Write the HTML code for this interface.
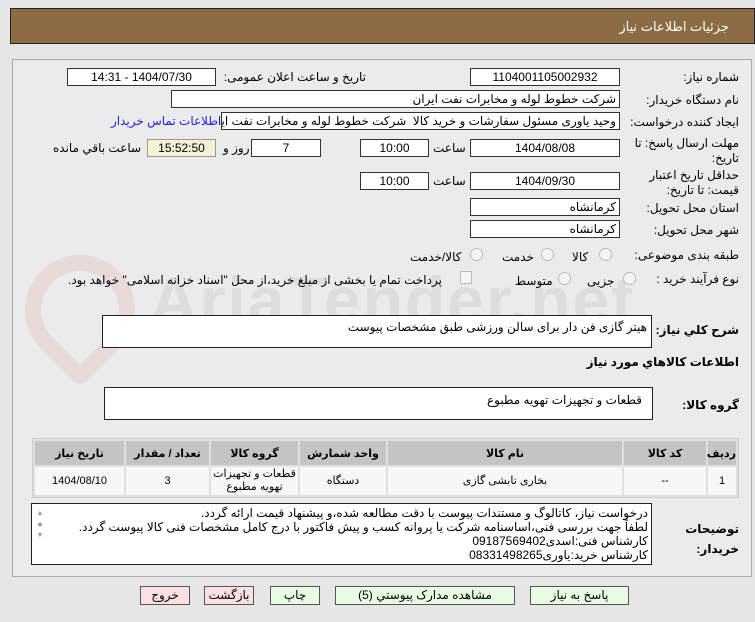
<!DOCTYPE html>
<html><head><meta charset="utf-8"><style>
*{box-sizing:border-box;margin:0;padding:0}
body{width:755px;height:622px;background:#e6e6e6;font-family:"Liberation Sans","DejaVu Sans",sans-serif;font-size:12px;color:#000;position:relative;overflow:hidden;direction:rtl}
.a{position:absolute}
.hdr{left:10px;top:8px;width:745px;height:36px;background:#8c6c42;border:1px solid #222}
.hdr span{position:absolute;right:25px;top:10px;color:#fff;font-size:13px}
.panel{left:12px;top:59px;width:740px;height:518px;border:1px solid #aaa;background:#ebebeb}
.box{position:absolute;background:#fff;border:1px solid #333;height:18px;line-height:16px;font-size:12px;padding:0 3px;white-space:nowrap;overflow:hidden}
.c{text-align:center}
.lbl{position:absolute;font-size:12px;white-space:nowrap;line-height:15px}
.radio{position:absolute;width:13px;height:13px;border-radius:50%;border:1px solid #bbb;background:#f4f4f4}
table{position:absolute;left:32px;top:438px;width:707px;border-collapse:separate;border-spacing:2px;background:#e0e0e0;border:1px solid #ccc;table-layout:fixed}
th{background:#c4c4c4;height:24px;font-size:11px}
td{background:#f7f7f7;height:28px;text-align:center;font-size:11px;line-height:13px;padding:0}
.btn{position:absolute;top:586px;height:19px;border:1px solid #555;text-align:center;font-size:12px;line-height:17px}
.g{background:#e8fbe3}.p{background:#fde0e0}
</style></head><body>
<div class="a hdr"><span>جزئیات اطلاعات نیاز</span></div>
<div class="a panel"></div>
<div class="a" style="left:25px;top:255px;width:110px;height:110px;border:16px solid rgba(220,120,120,.15);border-radius:50% 50% 10px 50%;transform:rotate(45deg)"></div>
<div class="a" style="left:150px;top:262px;font-size:66px;font-weight:bold;color:rgba(160,160,160,.18);direction:ltr;letter-spacing:2px">AriaTender.net</div>

<div class="lbl" style="right:16px;top:70px">شماره نیاز:</div>
<div class="box c" style="left:470px;top:68px;width:150px">1104001105002932</div>
<div class="lbl" style="right:389px;top:70px">تاریخ و ساعت اعلان عمومی:</div>
<div class="box c" style="left:67px;top:68px;width:149px">1404/07/30 - 14:31</div>

<div class="lbl" style="right:16px;top:93px">نام دستگاه خریدار:</div>
<div class="box" style="left:171px;top:90px;width:449px">شرکت خطوط لوله و مخابرات نفت ایران</div>

<div class="lbl" style="right:16px;top:115px">ایجاد کننده درخواست:</div>
<div class="box" style="left:221px;top:112px;width:399px">وحید یاوری مسئول سفارشات و خرید کالا&nbsp; شرکت خطوط لوله و مخابرات نفت ایران</div>
<div class="lbl" style="left:111px;top:114px;color:#2222dd">اطلاعات تماس خریدار</div>

<div class="lbl" style="right:16px;top:136px;text-align:right">مهلت ارسال پاسخ: تا<br>تاریخ:</div>
<div class="box c" style="left:470px;top:139px;width:150px">1404/08/08</div>
<div class="lbl" style="left:433px;top:141px">ساعت</div>
<div class="box c" style="left:360px;top:139px;width:69px">10:00</div>
<div class="box c" style="left:251px;top:139px;width:70px">7</div>
<div class="lbl" style="left:223px;top:141px">روز و</div>
<div class="box c" style="left:147px;top:139px;width:69px;background:#f3f2d6;border-color:#999">15:52:50</div>
<div class="lbl" style="left:53px;top:141px">ساعت باقي مانده</div>

<div class="lbl" style="right:16px;top:168px;text-align:right">حداقل تاریخ اعتبار<br>قیمت: تا تاریخ:</div>
<div class="box c" style="left:470px;top:172px;width:150px">1404/09/30</div>
<div class="lbl" style="left:433px;top:174px">ساعت</div>
<div class="box c" style="left:360px;top:172px;width:69px">10:00</div>

<div class="lbl" style="right:16px;top:201px">استان محل تحویل:</div>
<div class="box" style="left:470px;top:198px;width:150px">کرمانشاه</div>
<div class="lbl" style="right:16px;top:223px">شهر محل تحویل:</div>
<div class="box" style="left:470px;top:220px;width:150px">کرمانشاه</div>

<div class="lbl" style="right:16px;top:248px">طبقه بندی موضوعی:</div>
<div class="radio" style="left:599px;top:248px"></div><div class="lbl" style="left:572px;top:250px">کالا</div>
<div class="radio" style="left:541px;top:248px"></div><div class="lbl" style="left:502px;top:250px">خدمت</div>
<div class="radio" style="left:470px;top:248px"></div><div class="lbl" style="left:410px;top:250px">کالا/خدمت</div>

<div class="lbl" style="right:16px;top:272px">نوع فرآیند خرید :</div>
<div class="radio" style="left:623px;top:272px"></div><div class="lbl" style="left:587px;top:274px">جزیی</div>
<div class="radio" style="left:558px;top:272px"></div><div class="lbl" style="left:515px;top:274px">متوسط</div>
<div class="a" style="left:460px;top:271px;width:12px;height:13px;border:1px solid #bbb;background:#f4f4f4"></div>
<div class="lbl" style="left:68px;top:273px">پرداخت تمام یا بخشی از مبلغ خرید،از محل "اسناد خزانه اسلامی" خواهد بود.</div>

<div class="lbl" style="right:16px;top:323px;font-weight:bold">شرح کلي نیاز:</div>
<div class="box" style="left:102px;top:315px;width:550px;height:33px;border-color:#222;padding-top:3px;padding-right:4px">هیتر گازی فن دار برای سالن ورزشی طبق مشخصات پیوست</div>
<div class="lbl" style="right:16px;top:355px;font-weight:bold">اطلاعات کالاهاي مورد نیاز</div>
<div class="lbl" style="right:16px;top:398px;font-weight:bold">گروه کالا:</div>
<div class="box" style="left:104px;top:387px;width:549px;height:33px;padding-top:4px;padding-right:10px;border-color:#222">قطعات و تجهیزات تهویه مطبوع</div>

<table>
<colgroup><col style="width:28px"><col style="width:82px"><col style="width:234px"><col style="width:86px"><col style="width:87px"><col style="width:83px"><col></colgroup>
<tr><th>ردیف</th><th>کد کالا</th><th>نام کالا</th><th>واحد شمارش</th><th>گروه کالا</th><th>تعداد / مقدار</th><th>تاریخ نیاز</th></tr>
<tr><td>1</td><td>--</td><td>بخاری تابشی گازی</td><td>دستگاه</td><td>قطعات و تجهیزات<br>تهویه مطبوع</td><td>3</td><td>1404/08/10</td></tr>
</table>

<div class="lbl" style="right:16px;top:519px;font-weight:bold;line-height:20px">توضیحات<br>خریدار:</div>
<div class="box" style="left:31px;top:503px;width:621px;height:62px;line-height:14px;font-size:12px;padding-top:2px;padding-left:18px;white-space:normal;border-color:#222">درخواست نیاز، کاتالوگ و مستندات پیوست با دقت مطالعه شده،و پیشنهاد قیمت ارائه گردد.<br>لطفاً جهت بررسی فنی،اساسنامه شرکت یا پروانه کسب و پیش فاکتور با درج کامل مشخصات فنی کالا پیوست گردد.<br>کارشناس فنی:اسدی09187569402<br>کارشناس خرید:یاوری08331498265</div>
<div class="a" style="left:35px;top:509px;font-size:7px;color:#999;line-height:10px;text-align:center;width:10px">▲<br><span style="font-size:9px">●</span><br>▼</div>

<div class="btn p" style="left:140px;width:50px">خروج</div>
<div class="btn p" style="left:204px;width:50px">بازگشت</div>
<div class="btn g" style="left:270px;width:50px">چاپ</div>
<div class="btn g" style="left:335px;width:180px">مشاهده مدارک پیوستي (5)</div>
<div class="btn g" style="left:530px;width:99px">پاسخ به نیاز</div>
</body></html>
